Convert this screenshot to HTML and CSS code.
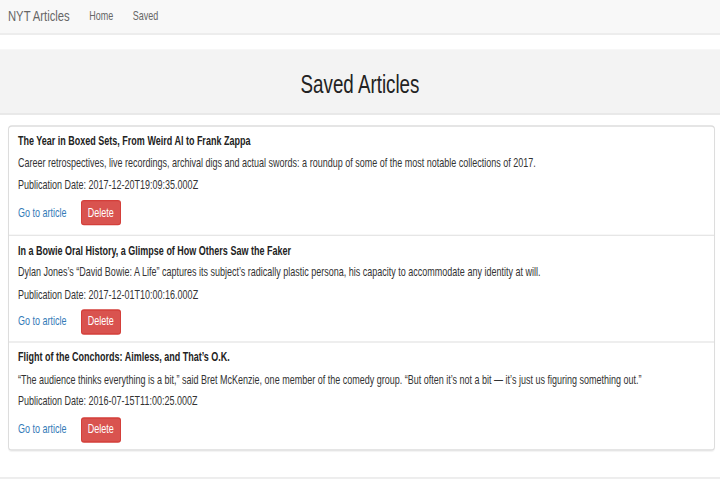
FILE: index.html
```html
<!DOCTYPE html>
<html>
<head>
<meta charset="utf-8">
<link rel="stylesheet" href="styles.css">
</head>
<body>
<div class="page">
  <nav class="navbar">
    <a class="brand" href="#">NYT Articles</a>
    <a class="nav-link" href="#">Home</a>
    <a class="nav-link" href="#">Saved</a>
  </nav>
  <header class="jumbotron">
    <h1>Saved Articles</h1>
  </header>
  <ul class="list">
    <li class="item">
      <h3 class="title">The Year in Boxed Sets, From Weird Al to Frank Zappa</h3>
      <p class="line">Career retrospectives, live recordings, archival digs and actual swords: a roundup of some of the most notable collections of 2017.</p>
      <p class="line">Publication Date: 2017-12-20T19:09:35.000Z</p>
      <div class="actions"><a class="go" href="#">Go to article</a><button class="btn-del">Delete</button></div>
    </li>
    <li class="item">
      <h3 class="title">In a Bowie Oral History, a Glimpse of How Others Saw the Faker</h3>
      <p class="line">Dylan Jones’s “David Bowie: A Life” captures its subject’s radically plastic persona, his capacity to accommodate any identity at will.</p>
      <p class="line">Publication Date: 2017-12-01T10:00:16.000Z</p>
      <div class="actions"><a class="go" href="#">Go to article</a><button class="btn-del">Delete</button></div>
    </li>
    <li class="item">
      <h3 class="title">Flight of the Conchords: Aimless, and That’s O.K.</h3>
      <p class="line">“The audience thinks everything is a bit,” said Bret McKenzie, one member of the comedy group. “But often it’s not a bit — it’s just us figuring something out.”</p>
      <p class="line">Publication Date: 2016-07-15T11:00:25.000Z</p>
      <div class="actions"><a class="go" href="#">Go to article</a><button class="btn-del">Delete</button></div>
    </li>
  </ul>
  <footer class="footer"></footer>
</div>
</body>
</html>
```
FILE: styles.css
```css
* { box-sizing: border-box; }
html, body { margin: 0; padding: 0; background: #fff; }
body {
  min-height: 480px;
  font-family: "Liberation Sans", Arial, sans-serif;
  font-size: 9px;
  color: #333;
}
/* the page is laid out in a 720x360 space and stretched to the 480px tall window,
   giving the tall, condensed lettering of the original */
.page {
  width: 720px;
  transform: scaleY(1.3333);
  transform-origin: 0 0;
}
.navbar {
  height: 26.25px;
  background: #f8f8f8;
  border-bottom: 0.75px solid #e7e7e7;
  display: flex;
  align-items: center;
  padding: 0 0 2.25px 8px;
}
.brand {
  font-size: 11.25px;
  color: #666;
  text-decoration: none;
  margin-right: 19.5px;
}
.nav-link {
  font-size: 9px;
  color: #666;
  text-decoration: none;
  margin-right: 19.5px;
}
.jumbotron {
  margin-top: 10.5px;
  height: 49.5px;
  background: #f3f3f3;
  border-bottom: 0.75px solid #e3e3e3;
  display: flex;
  align-items: center;
  justify-content: center;
}
.jumbotron h1 {
  margin: 0;
  font-weight: normal;
  font-size: 18.75px;
  color: #222;
  padding-top: 6.75px;
}
.list {
  list-style: none;
  margin: 7.5px 5px 0 8px;
  padding: 0;
  border: 0.75px solid #ddd;
  border-radius: 4px / 3px;
  box-shadow: 0 0.75px 0.75px rgba(0,0,0,0.05);
}
.item {
  height: 80.75px;
  padding: 6px 9px 0 9px;
  border-top: 0.75px solid #e6e6e6;
}
.item:first-child { border-top: none; }
.title {
  margin: 0;
  font-size: 9px;
  font-weight: bold;
  color: #222;
  line-height: 10.5px;
}
.line {
  margin: 6px 0 0 0;
  font-size: 9px;
  line-height: 10.5px;
}
.actions {
  margin-top: 6px;
  display: flex;
  align-items: center;
}
.go {
  color: #337ab7;
  text-decoration: none;
  font-size: 9px;
  margin-right: 14px;
}
.btn-del {
  background: #d9534f;
  color: #fff;
  border: 0.75px solid #d43f3a;
  border-radius: 3px / 2.25px;
  font-family: inherit;
  font-size: 9px;
  width: 40.5px;
  height: 18.75px;
  padding: 0;
}
.footer {
  margin-top: 20px;
  border-top: 0.75px solid #e5e5e5;
}
```
